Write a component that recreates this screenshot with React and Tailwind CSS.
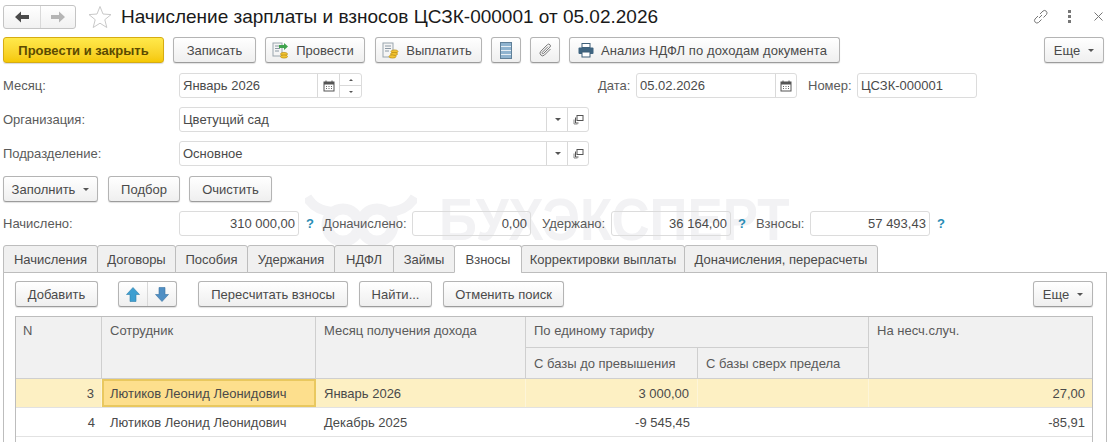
import React from "react";

const Btn = ({ w, children, className = "" }) => (
  <div className={`h-[26px] shrink-0 flex items-center justify-center gap-[7px] rounded-[3px] border border-[#b4b4b4] border-b-[#9c9c9c] bg-gradient-to-b from-white to-[#efefef] shadow-[0_1px_1px_rgba(0,0,0,0.12)] text-[#4a4a4a] ${w} ${className}`}>
    {children}
  </div>
);

const Caret = () => <span className="inline-block w-0 h-0 border-x-[3px] border-x-transparent border-t-[3px] border-t-[#555] ml-[1px]" />;

const Cal = () => (
  <svg width="12" height="12" viewBox="0 0 12 12"><rect x="1" y="2" width="10" height="9" fill="none" stroke="#555" /><rect x="1" y="2" width="10" height="2.5" fill="#555" /><path d="M3 0.5v2M9 0.5v2" stroke="#555" /><path d="M3 6.5h1M5.5 6.5h1M8 6.5h1M3 8.5h1M5.5 8.5h1M8 8.5h1" stroke="#666" /></svg>
);

const OpenIcon = () => (
  <svg width="11" height="11" viewBox="0 0 11 11" fill="none" stroke="#555"><rect x="4" y="1.5" width="6" height="5" /><path d="M2.5 3.5v5.5h3" /><path d="M1 5.5v4.5h3.5" stroke="#888" /></svg>
);

const Sep = ({ className = "" }) => <div className={`w-px self-stretch bg-[#d9d9d9] ${className}`} />;

const Field = ({ w, children, right, className = "" }) => (
  <div className={`h-[25px] shrink-0 flex items-center rounded-[3px] border border-[#dcdcdc] text-[#4a4a4a] ${w} ${className}`}>
    <div className={`flex-1 px-[3px] truncate ${right ? "text-right" : ""}`}>{children}</div>
  </div>
);

const Help = () => <span className="text-[#2a8cb4] font-bold w-[8px]">?</span>;

const tabs = [
  ["Начисления", "w-[95px]"],
  ["Договоры", "w-[79px]"],
  ["Пособия", "w-[73px]"],
  ["Удержания", "w-[88px]"],
  ["НДФЛ", "w-[60px]"],
  ["Займы", "w-[62px]"],
  ["Взносы", "w-[68px]"],
  ["Корректировки выплаты", "w-[164px]"],
  ["Доначисления, перерасчеты", "w-[194px]"],
];

const Lookup = ({ text }) => (
  <div className="h-[25px] w-[410px] flex items-center rounded-[3px] border border-[#dcdcdc] bg-white text-[#4a4a4a]">
    <div className="flex-1 px-[3px]">{text}</div>
    <Sep />
    <div className="w-[20px] flex justify-center"><Caret /></div>
    <Sep />
    <div className="w-[20px] flex justify-center"><OpenIcon /></div>
  </div>
);

const FormRow = ({ label, children, className = "" }) => (
  <div className={`flex items-center pl-[3px] ${className}`}>
    <div className="w-[176px] text-[#5a5a5a]">{label}</div>
    {children}
  </div>
);

const cols = "grid-cols-[86px_214px_210px_172px_171px_1fr]";
const hcell = "border-r border-[#cfcfcf] px-[8px] text-[#5a5a5a]";

const DataRow = ({ selected, n, month, base, acc }) => (
  <div className={`grid ${cols} h-[29px] items-stretch border-b border-[#e2e2e2] text-[#4a4a4a] ${selected ? "bg-[#fdf0c3]" : "bg-white"}`}>
    <div className={`flex items-center justify-end pr-[7px] ${selected ? "border-r border-[#fdf5d8]" : ""}`}>{n}</div>
    <div className={`flex items-center pl-[6px] border-2 ${selected ? "bg-[#fddf8d] border-[#e9c85f]" : "border-transparent"}`}>Лютиков Леонид Леонидович</div>
    <div className={`flex items-center px-[8px] ${selected ? "border-r border-[#fdf5d8]" : ""}`}>{month}</div>
    <div className={`flex items-center justify-end px-[8px] ${selected ? "border-r border-[#fdf5d8]" : ""}`}>{base}</div>
    <div className={selected ? "border-r border-[#fdf5d8]" : ""} />
    <div className="flex items-center justify-end px-[7px]">{acc}</div>
  </div>
);

export default function App() {
  return (
    <div className="relative w-[1109px] h-[442px] overflow-hidden bg-white text-[13px] leading-[15px] text-[#4a4a4a] [font-family:'Liberation_Sans',Arial,sans-serif]">
      {/* watermark */}
      <svg className="absolute left-[305px] top-[193px]" width="112" height="54" viewBox="0 0 112 54" fill="none" stroke="#f2f2f4" strokeWidth="11">
        <circle cx="38" cy="32" r="16" />
        <circle cx="72" cy="32" r="16" />
        <path d="M2 4c6 10 14 14 26 15M110 4c-6 10-14 14-26 15" strokeWidth="10" />
      </svg>
      <div className="absolute left-[439px] top-[186px] origin-left scale-x-[0.88] text-[60px] leading-[68px] font-bold text-[#f2f2f4] whitespace-nowrap">БУХЭКСПЕРТ</div>

      <div className="relative">
        {/* title bar */}
        <div className="h-[37px] flex items-center pb-[7px] pl-[3px] pr-[6px] pt-[3px]">
          <div className="h-[24px] w-[73px] flex rounded-[3px] border border-[#c4c4c4] bg-gradient-to-b from-white to-[#f1f1f1]">
            <div className="w-[36px] flex items-center justify-center">
              <svg width="16" height="12" viewBox="0 0 16 12"><path d="M7 0.5L1 6l6 5.5V8h8V4H7z" fill="#4a4a4a" /></svg>
            </div>
            <Sep />
            <div className="flex-1 flex items-center justify-center">
              <svg width="16" height="12" viewBox="0 0 16 12"><path d="M9 0.5L15 6l-6 5.5V8H1V4h8z" fill="#b5b5b5" /></svg>
            </div>
          </div>
          <svg className="ml-[12px]" width="24" height="24" viewBox="0 0 24 24"><path d="M12 1.5l3 7.5 8 .6-6.2 5.1 2 7.8L12 18.2l-6.8 4.3 2-7.8L1 9.6l8-.6z" fill="none" stroke="#c9c9c9" /></svg>
          <div className="ml-[9px] text-[19px] leading-[26px] text-[#1a1a1a]">Начисление зарплаты и взносов ЦСЗК-000001 от 05.02.2026</div>
          <div className="ml-auto flex items-center">
            <svg width="17" height="17" viewBox="0 0 17 17" fill="none" stroke="#777"><path d="M7 10l3-3M6 8l-3 3a2.5 2.5 0 0 0 3.5 3.5l3-3M8 6l3-3a2.5 2.5 0 0 1 3.5 3.5l-3 3" /></svg>
            <div className="ml-[19px] flex flex-col gap-[2px]">
              <span className="w-[3px] h-[3px] bg-[#777]" /><span className="w-[3px] h-[3px] bg-[#777]" /><span className="w-[3px] h-[3px] bg-[#777]" />
            </div>
            <svg className="ml-[23px]" width="9" height="9" viewBox="0 0 9 9" stroke="#777"><path d="M0.5 0.5l8 8M8.5 0.5l-8 8" /></svg>
          </div>
        </div>

        {/* toolbar */}
        <div className="flex pl-[3px] pr-[5px]">
          <div className="h-[26px] w-[161px] flex items-center justify-center rounded-[3px] border border-[#d6ac12] bg-gradient-to-b from-[#ffe94a] to-[#f5c800] shadow-[0_1px_1px_rgba(0,0,0,0.15)] font-bold text-[#5c4a00]">Провести и закрыть</div>
          <Btn w="w-[83px]" className="ml-[9px]">Записать</Btn>
          <Btn w="w-[100px]" className="ml-[9px] pr-[4px]">
            <svg width="17" height="17" viewBox="0 0 17 17"><rect x="1" y="1" width="9" height="13" fill="#f5f5f5" stroke="#9aa5ad" /><path d="M3 4h5M3 6.5h5M3 9h4" stroke="#8a98a4" /><path d="M7 3h5V1l4 3.5L12 8V6H7z" fill="#3fa34d" /><ellipse cx="12" cy="12" rx="3.5" ry="1.6" fill="#f3c433" stroke="#b98d10" strokeWidth="0.7" /><ellipse cx="12" cy="14.5" rx="3.5" ry="1.6" fill="#f3c433" stroke="#b98d10" strokeWidth="0.7" /></svg>
            Провести
          </Btn>
          <Btn w="w-[107px]" className="ml-[10px] pr-[3px]">
            <svg width="17" height="17" viewBox="0 0 17 17"><rect x="1" y="1" width="10" height="14" fill="#f5f5f5" stroke="#9aa5ad" /><path d="M3 4h6M3 6.5h6M3 9h4" stroke="#8a98a4" /><ellipse cx="12.5" cy="9.5" rx="3.5" ry="1.6" fill="#f3c433" stroke="#b98d10" strokeWidth="0.7" /><ellipse cx="12" cy="12" rx="3.5" ry="1.6" fill="#f3c433" stroke="#b98d10" strokeWidth="0.7" /><ellipse cx="10.5" cy="14.5" rx="3.5" ry="1.6" fill="#f3c433" stroke="#b98d10" strokeWidth="0.7" /></svg>
            Выплатить
          </Btn>
          <Btn w="w-[30px]" className="ml-[9px]">
            <svg width="12" height="17" viewBox="0 0 12 17"><rect x="0.5" y="0.5" width="11" height="16" fill="#8fb3cf" stroke="#5f7f98" /><path d="M1 4.5h10M1 8.5h10M1 12.5h10" stroke="#e6eef4" /></svg>
          </Btn>
          <Btn w="w-[30px]" className="ml-[9px]">
            <svg width="15" height="15" viewBox="0 0 15 15" fill="none" stroke="#777"><path d="M12.5 6l-6 6a2.6 2.6 0 0 1-3.7-3.7l6.6-6.6a1.7 1.7 0 0 1 2.5 2.5L5.5 10.5a.8.8 0 0 1-1.2-1.2L10 3.6" /></svg>
          </Btn>
          <Btn w="w-[271px]" className="ml-[9px] pr-[4px] tracking-[0.08px]">
            <svg width="16" height="15" viewBox="0 0 16 15"><rect x="4" y="0.5" width="8" height="4" fill="#fff" stroke="#3f5f78" /><rect x="0.5" y="4.5" width="15" height="6.5" rx="1" fill="#3f6480" /><rect x="4" y="9" width="8" height="5" fill="#fff" stroke="#3f5f78" /></svg>
            Анализ НДФЛ по доходам документа
          </Btn>
          <Btn w="w-[60px]" className="ml-auto">Еще <Caret /></Btn>
        </div>

        {/* month row */}
        <FormRow label="Месяц:" className="mt-[10px]">
          <div className="h-[25px] w-[183px] flex items-center rounded-[3px] border border-[#dcdcdc] bg-white">
            <div className="flex-1 px-[3px]">Январь 2026</div>
            <Sep />
            <div className="w-[21px] flex justify-center"><Cal /></div>
            <Sep />
            <div className="w-[21px] self-stretch flex flex-col">
              <div className="flex-1 flex items-center justify-center border-b border-[#d9d9d9]"><span className="w-0 h-0 border-x-[2px] border-x-transparent border-b-[2px] border-b-[#555]" /></div>
              <div className="flex-1 flex items-center justify-center"><span className="w-0 h-0 border-x-[2px] border-x-transparent border-t-[2px] border-t-[#555]" /></div>
            </div>
          </div>
          <div className="ml-[236px] w-[38px] text-[#5a5a5a]">Дата:</div>
          <div className="h-[25px] w-[161px] flex items-center rounded-[3px] border border-[#dcdcdc] bg-white">
            <div className="flex-1 px-[3px]">05.02.2026</div>
            <Sep />
            <div className="w-[20px] flex justify-center"><Cal /></div>
          </div>
          <div className="ml-[11px] w-[49px] text-[#5a5a5a]">Номер:</div>
          <Field w="w-[120px]">ЦСЗК-000001</Field>
        </FormRow>

        <FormRow label="Организация:" className="mt-[9px]"><Lookup text="Цветущий сад" /></FormRow>
        <FormRow label="Подразделение:" className="mt-[9px]"><Lookup text="Основное" /></FormRow>

        <div className="flex pl-[3px] mt-[10px]">
          <Btn w="w-[95px]">Заполнить <Caret /></Btn>
          <Btn w="w-[72px]" className="ml-[10px]">Подбор</Btn>
          <Btn w="w-[83px]" className="ml-[9px]">Очистить</Btn>
        </div>

        <FormRow label="Начислено:" className="mt-[9px]">
          <Field w="w-[120px]" right>310 000,00</Field>
          <div className="ml-[7px]"><Help /></div>
          <div className="ml-[9px] w-[89px] text-[#5a5a5a]">Доначислено:</div>
          <Field w="w-[119px]" right>0,00</Field>
          <div className="ml-[11px] w-[69px] text-[#5a5a5a]">Удержано:</div>
          <Field w="w-[120px]" right>36 164,00</Field>
          <div className="ml-[7px]"><Help /></div>
          <div className="ml-[10px] w-[54px] text-[#5a5a5a]">Взносы:</div>
          <Field w="w-[120px]" right>57 493,43</Field>
          <div className="ml-[7px]"><Help /></div>
        </FormRow>

        {/* tabs */}
        <div className="flex pl-[3px] mt-[9px] h-[28px] relative z-10">
          {tabs.map(([t, w]) => {
            const active = t === "Взносы";
            return (
              <div key={t} className={`${w} h-[28px] flex items-center justify-center rounded-t-[3px] border border-[#bdbdbd] -mr-px text-[#4a4a4a] ${active ? "bg-white border-b-white" : "bg-[#f0f0f0] h-[27px]"}`}>{t}</div>
            );
          })}
        </div>

        {/* panel */}
        <div className="ml-[3px] mr-[2px] -mt-px border border-[#bdbdbd] h-[200px] pt-[8px] pl-[11px] pr-[13px]">
          <div className="flex">
            <Btn w="w-[83px]">Добавить</Btn>
            <div className="ml-[20px] h-[26px] w-[59px] flex rounded-[3px] border border-[#b4b4b4] border-b-[#9c9c9c] bg-gradient-to-b from-white to-[#efefef] shadow-[0_1px_1px_rgba(0,0,0,0.12)]">
              <div className="flex-1 flex items-center justify-center">
                <svg width="14" height="15" viewBox="0 0 14 15"><path d="M7 0.5L13.5 7.5H10V14.5H4V7.5H0.5z" fill="#3e9fd1" stroke="#2f7fab" strokeWidth="0.6" /></svg>
              </div>
              <Sep />
              <div className="flex-1 flex items-center justify-center">
                <svg width="14" height="15" viewBox="0 0 14 15"><path d="M7 14.5L13.5 7.5H10V0.5H4V7.5H0.5z" fill="#4f8fc4" stroke="#3a72a3" strokeWidth="0.6" /></svg>
              </div>
            </div>
            <Btn w="w-[150px]" className="ml-[21px]">Пересчитать взносы</Btn>
            <Btn w="w-[73px]" className="ml-[11px]">Найти...</Btn>
            <Btn w="w-[121px]" className="ml-[11px]">Отменить поиск</Btn>
            <Btn w="w-[60px]" className="ml-auto">Еще <Caret /></Btn>
          </div>

          {/* table */}
          <div className="mt-[9px] border border-[#bdbdbd] h-[160px]">
            <div className={`grid ${cols} grid-rows-[31px_30px] bg-[#f1f1f1] border-b border-[#cfcfcf]`}>
              <div className={`row-span-2 pt-[6px] border-r border-[#cfcfcf] px-[7px] text-[#5a5a5a]`}>N</div>
              <div className={`row-span-2 pt-[6px] ${hcell}`}>Сотрудник</div>
              <div className={`row-span-2 pt-[6px] ${hcell}`}>Месяц получения дохода</div>
              <div className={`col-span-2 pt-[6px] border-b ${hcell}`}>По единому тарифу</div>
              <div className="row-span-2 pt-[6px] px-[8px] text-[#5a5a5a]">На несч.случ.</div>
              <div className={`flex items-center ${hcell}`}>С базы до превышения</div>
              <div className={`flex items-center ${hcell}`}>С базы сверх предела</div>
            </div>
            <DataRow selected n="3" month="Январь 2026" base="3 000,00" acc="27,00" />
            <DataRow n="4" month="Декабрь 2025" base="-9 545,45" acc="-85,91" />
          </div>
        </div>
      </div>
    </div>
  );
}
